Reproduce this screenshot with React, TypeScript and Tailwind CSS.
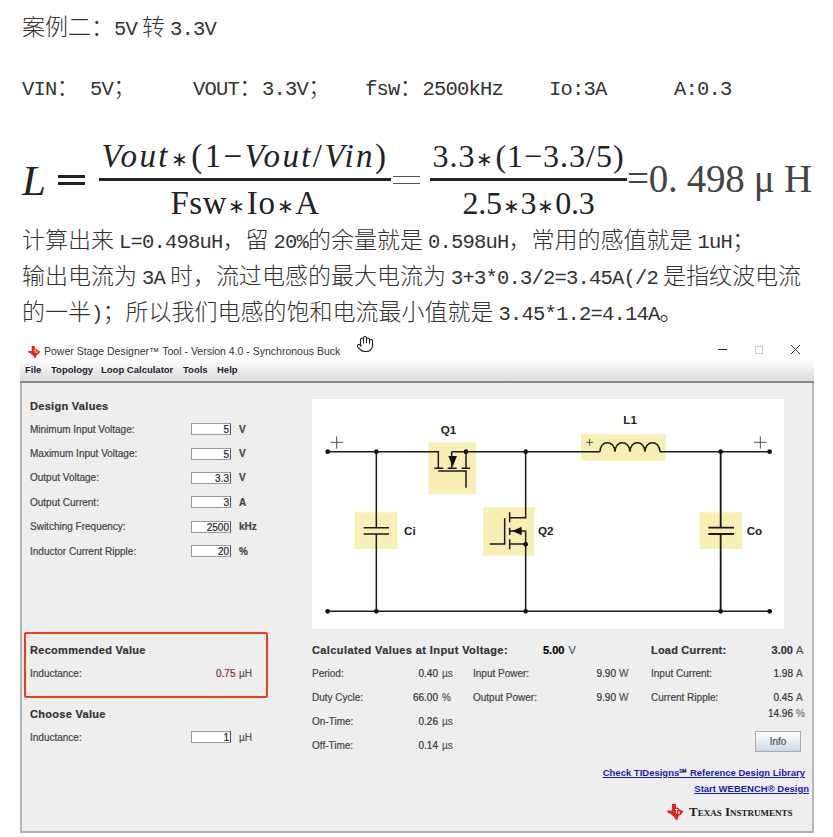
import { Hand } from "lucide-react";

// Latin text in the document is half width, CJK is full width, so the two need different sizes
const Zh = ({ text }: { text: string }) => (
  <>
    {text.split(/([\x00-\x7F]+)/).map((part, i) =>
      /^[\x00-\x7F]+$/.test(part) ? (
        <span key={i} className="text-[20.5px] tracking-[-0.8px] [word-spacing:-6.5px]">
          {part}
        </span>
      ) : (
        <span key={i}>{part}</span>
      ),
    )}
  </>
);

const DocLine = ({ text, className = "" }: { text: string; className?: string }) => (
  <div className={`h-[36px] whitespace-pre text-[23px] leading-[36px] text-[#333] ${className}`}>
    <Zh text={text} />
  </div>
);

const Ast = () => <span className="mx-[1px] align-[1px] text-[20px]">∗</span>;

const Fraction = ({
  top,
  bottom,
  className,
}: {
  top: React.ReactNode;
  bottom: React.ReactNode;
  className: string;
}) => (
  <div className={`flex flex-col items-center ${className}`}>
    <div className="h-[38px] leading-[33px] whitespace-pre">{top}</div>
    <div className="h-[3px] w-full bg-[#222]" />
    <div className="h-[39px] leading-[44px] whitespace-pre">{bottom}</div>
  </div>
);

const TiLogo = ({ className }: { className: string }) => (
  <svg viewBox="0 0 16 16" className={className}>
    <path
      d="M5 0h4v3.5l2.5.5 1.5 2 2.5.5.5 1.5-2 2.5-2.5 1.5-1 4-2-.5-1.5-3-2-1-1-1.5-3-1L0 6.5h5z"
      fill="#e2231a"
    />
    <path d="M8 5.5h3M9.5 5.5v4M12 7v3" stroke="#fff" strokeWidth="1" fill="none" />
  </svg>
);

const Field = ({ value }: { value: string }) => (
  <div className="h-[12px] w-[40px] border border-[#999] border-r-[#555] bg-white pr-[1px] text-right leading-[11px] text-[#222]">
    {value}
  </div>
);

const InputRow = ({ label, value, unit }: { label: string; value: string; unit: string }) => (
  <div className="flex h-[24.4px] items-center pl-[8px]">
    <div className="w-[161px] text-[#444]">{label}</div>
    <Field value={value} />
    <div className="ml-[8px] font-bold text-[#444]">{unit}</div>
  </div>
);

const ValueRow = ({
  label,
  value,
  unit,
  unitClass,
}: {
  label: string;
  value: string;
  unit: string;
  unitClass: string;
}) => (
  <div className="flex h-[24px] items-center">
    <div className="flex-1 text-[#444]">{label}</div>
    <div className="text-[#333]">{value}</div>
    <div className={`text-[#555] ${unitClass}`}>{unit}</div>
  </div>
);

const Circuit = () => (
  <svg viewBox="36 27 1416 690" className="h-[230px] w-[472px] bg-white">
    <g fill="#f8efb4">
      <rect x="385" y="157" width="143" height="155" />
      <rect x="843" y="132" width="254" height="80" />
      <rect x="164" y="367" width="128" height="110" />
      <rect x="1199" y="367" width="127" height="110" />
      <rect x="550" y="352" width="153" height="145" />
    </g>
    <g fill="none" stroke="#1a1a1a" strokeWidth="4.5">
      {/* rails */}
      <path d="M83 185H415V235M455 185H900M1080 185H1409M83 664H1409" />
      {/* Ci and Co */}
      <path d="M229 185V413M229 432V664M191 413H267M191 432H267" />
      <path d="M1262 185V413M1262 432V664M1225 413H1302M1225 432H1302" strokeWidth="5.5" />
      {/* L1 */}
      <path d="M900 185c0-36 44-36 45 0c0-36 44-36 45 0c0-36 44-36 45 0c0-36 44-36 45 0" />
      {/* Q1 */}
      <path d="M403 235H430M443 235H470M485 235H510M455 185V235M498 185V235M415 243H498V293" />
      {/* Q2 */}
      <path d="M677 185V383H629M629 367V397M629 413V435M629 448V478M614 385V462H569M629 423H677V664M629 462H677" />
    </g>
    <g fill="none" stroke="#333" strokeWidth="2.5">
      <path d="M92 157H129M110 139V176M1362 157H1400M1381 139V176M859 157H879M869 147V167" />
    </g>
    <g fill="#111">
      <path d="M445 198H471L458 230Z" />
      <path d="M637 423L665 410V436Z" />
      {[
        [83, 185],
        [229, 185],
        [498, 185],
        [677, 185],
        [1262, 185],
        [1409, 185],
        [83, 664],
        [229, 664],
        [677, 664],
        [1262, 664],
        [1409, 664],
        [677, 463],
      ].map(([cx, cy]) => (
        <circle key={`${cx}-${cy}`} cx={cx} cy={cy} r="7" />
      ))}
    </g>
    <g fontFamily="'Liberation Sans', sans-serif" fontWeight="700" fontSize="35" fill="#222">
      <text x="422" y="133">Q1</text>
      <text x="970" y="102">L1</text>
      <text x="312" y="435">Ci</text>
      <text x="714" y="435">Q2</text>
      <text x="1340" y="435">Co</text>
    </g>
  </svg>
);

export default function App() {
  return (
    <div className="h-[837px] w-[833px] overflow-hidden bg-white font-['Liberation_Mono','Noto_Sans_CJK_SC',monospace] font-light">
      <div className="pl-[22px] pt-[11px]">
        <DocLine text="案例二：5V 转 3.3V" />
        <div className="mt-[24px] flex h-[36px] items-center text-[23px] text-[#333]">
          <div className="w-[68px]"><Zh text="VIN：" /></div>
          <div className="w-[103px]"><Zh text="5V；" /></div>
          <div className="w-[172px]"><Zh text="VOUT：3.3V；" /></div>
          <div className="w-[184px]"><Zh text="fsw：2500kHz" /></div>
          <div className="w-[125px]"><Zh text="Io:3A" /></div>
          <div><Zh text="A:0.3" /></div>
        </div>
        {/* Formula */}
        <div className="mt-[33px] flex h-[80px] items-center font-['Liberation_Serif',serif] font-normal text-[#222]">
          <div className="w-[36px] text-[43px] italic leading-none">L</div>
          <div className="h-[10px] w-[27px] border-y-[3px] border-[#222]" />
          <Fraction
            className="ml-[14px] w-[292px] text-[33px]"
            top={
              <span className="tracking-[2.4px]">
                <i>Vout</i>
                <Ast />
                (1−<i>Vout</i>/<i>Vin</i>)
              </span>
            }
            bottom={
              <span className="tracking-[0.6px]">
                Fsw
                <Ast />
                Io
                <Ast />
                A
              </span>
            }
          />
          <div className="ml-[2px] h-[8px] w-[27px] border-y border-[#555]" />
          <Fraction
            className="ml-[10px] w-[197px] text-[32px]"
            top={
              <span className="tracking-[1px]">
                3.3
                <Ast />
                (1−3.3/5)
              </span>
            }
            bottom={
              <span className="tracking-[-0.2px]">
                2.5
                <Ast />
                3
                <Ast />
                0.3
              </span>
            }
          />
          <div className="-mt-[4px] whitespace-pre text-[39px] font-light leading-none tracking-[-0.3px] text-[#444]">=0. 498 μ H</div>
        </div>
        <div className="mt-[4px]">
          <DocLine text="计算出来 L=0.498uH，留 20%的余量就是 0.598uH，常用的感值就是 1uH；" />
          <DocLine text="输出电流为 3A 时，流过电感的最大电流为 3+3*0.3/2=3.45A(/2 是指纹波电流" />
          <DocLine text="的一半)；所以我们电感的饱和电流最小值就是 3.45*1.2=4.14A。" />
        </div>
      </div>

      {/* Application window */}
      <div className="ml-[20px] mt-[3px] h-[498px] w-[794px] font-['Liberation_Sans',sans-serif] text-[10px] font-normal [-webkit-text-stroke:0.2px]">
        <div className="relative flex h-[24px] items-center pl-[8px] pt-[9px] text-[#333] [-webkit-text-stroke:0px]">
          <TiLogo className="h-[12px] w-[12px]" />
          <div className="ml-[4px] text-[10.5px]">
            Power Stage Designer™ Tool - Version 4.0 - Synchronous Buck
          </div>
          <Hand className="absolute left-[336px] top-0 h-[18px] w-[18px] text-[#222]" strokeWidth={1.5} />
          <div className="absolute right-[14px] top-[10px] flex items-center gap-[28px]">
            <div className="h-[1px] w-[9px] bg-[#222]" />
            <div className="h-[8px] w-[8px] border border-[#ccc]" />
            <svg viewBox="0 0 9 9" className="h-[9px] w-[9px]">
              <path d="M0 0L9 9M9 0L0 9" stroke="#333" strokeWidth="1" />
            </svg>
          </div>
        </div>
        <div className="flex h-[24px] items-center border-b-2 border-[#8a8a8a] bg-gradient-to-b from-white to-[#dcdcdc] pl-[5px] text-[9.5px] font-bold text-[#223] [-webkit-text-stroke:0px]">
          <div className="w-[26px]">File</div>
          <div className="w-[50px]">Topology</div>
          <div className="w-[82px]">Loop Calculator</div>
          <div className="w-[34px]">Tools</div>
          <div>Help</div>
        </div>
        <div className="flex h-[450px] border-x-2 border-b-2 border-x-[#b5b5b5] border-b-[#b0b0b0] bg-[#eeeeee]">
          {/* Left inputs */}
          <div className="w-[290px] pt-[13px]">
            <div className="flex h-[21px] items-center pl-[8px] text-[11px] font-bold tracking-[0.3px] text-[#333]">
              Design Values
            </div>
            <InputRow label="Minimum Input Voltage:" value="5" unit="V" />
            <InputRow label="Maximum Input Voltage:" value="5" unit="V" />
            <InputRow label="Output Voltage:" value="3.3" unit="V" />
            <InputRow label="Output Current:" value="3" unit="A" />
            <InputRow label="Switching Frequency:" value="2500" unit="kHz" />
            <InputRow label="Inductor Current Ripple:" value="20" unit="%" />

            <div className="ml-[2px] mt-[69px] h-[66px] w-[244px] rounded-[2px] border-2 border-[#f03a1c] pl-[4px] pt-[5px]">
              <div className="flex h-[21px] items-center text-[11px] font-bold tracking-[0.3px] text-[#333]">
                Recommended Value
              </div>
              <div className="flex h-[26px] items-center">
                <div className="w-[186px] text-[#444]">Inductance:</div>
                <div className="w-[19px] text-right text-[#8a2a2a]">0.75</div>
                <div className="ml-[4px] text-[#555]">µH</div>
              </div>
            </div>

            <div className="mt-[5px] flex h-[22px] items-center pl-[8px] text-[11px] font-bold tracking-[0.3px] text-[#333]">
              Choose Value
            </div>
            <div className="flex h-[24px] items-center pl-[8px]">
              <div className="w-[161px] text-[#444]">Inductance:</div>
              <Field value="1" />
              <div className="ml-[8px] text-[#555]">µH</div>
            </div>
          </div>

          {/* Right side */}
          <div className="w-[500px] pt-[16px]">
            <Circuit />
            <div className="mt-[8px] flex">
              <div className="w-[339px]">
                <div className="flex h-[24px] items-center pt-[2px] text-[11px] font-bold text-[#333]">
                  <div className="w-[231px] tracking-[0.4px]">Calculated Values at Input Voltage:</div>
                  <div className="text-black">5.00</div>
                  <div className="ml-[4px] font-normal text-[#555]">V</div>
                </div>
                <div className="flex">
                  <div className="w-[161px] pr-[19px]">
                    <ValueRow label="Period:" value="0.40" unit="µs" unitClass="ml-[4px] w-[12px]" />
                    <ValueRow label="Duty Cycle:" value="66.00" unit="%" unitClass="ml-[4px] w-[12px]" />
                    <ValueRow label="On-Time:" value="0.26" unit="µs" unitClass="ml-[4px] w-[12px]" />
                    <ValueRow label="Off-Time:" value="0.14" unit="µs" unitClass="ml-[4px] w-[12px]" />
                  </div>
                  <div className="w-[178px] pr-[22px]">
                    <ValueRow label="Input Power:" value="9.90" unit="W" unitClass="ml-[3px] w-[10px]" />
                    <ValueRow label="Output Power:" value="9.90" unit="W" unitClass="ml-[3px] w-[10px]" />
                  </div>
                </div>
              </div>
              <div className="w-[153px]">
                <div className="flex h-[24px] items-center pt-[2px] text-[11px] font-bold text-[#333]">
                  <div className="flex-1 tracking-[0.2px]">Load Current:</div>
                  <div>3.00</div>
                  <div className="ml-[3px] w-[8px] font-normal text-[#555]">A</div>
                </div>
                <ValueRow label="Input Current:" value="1.98" unit="A" unitClass="ml-[3px] w-[8px]" />
                <ValueRow label="Current Ripple:" value="0.45" unit="A" unitClass="ml-[3px] w-[8px]" />
                <div className="-mt-[4px] flex h-[16px] items-center justify-end text-[#333]">
                  14.96
                  <span className="ml-[3px] w-[8px] text-[#777]">%</span>
                </div>
                <div className="mr-[3px] mt-[10px] ml-auto flex h-[21px] w-[46px] items-center justify-center border border-[#aaa] bg-gradient-to-b from-white to-[#c9d9ea] text-[#555]">
                  Info
                </div>
              </div>
            </div>
            <div className="mt-[8px] w-[497px] text-right text-[9.5px] font-bold text-[#1a1ab0] underline [-webkit-text-stroke:0px]">
              <div className="mr-[4px] h-[16px] leading-[16px]">Check TIDesigns℠ Reference Design Library</div>
              <div className="h-[16px] leading-[16px]">Start WEBENCH® Design</div>
            </div>
            <div className="mt-[7px] flex h-[16px] items-center pl-[355px]">
              <TiLogo className="h-[16px] w-[16px]" />
              <div className="ml-[6px] whitespace-nowrap font-['Liberation_Serif',serif] text-[13px] font-bold text-[#222] [-webkit-text-stroke:0px] [font-variant:small-caps]">
                Texas Instruments
              </div>
            </div>
          </div>
        </div>
      </div>
    </div>
  );
}
